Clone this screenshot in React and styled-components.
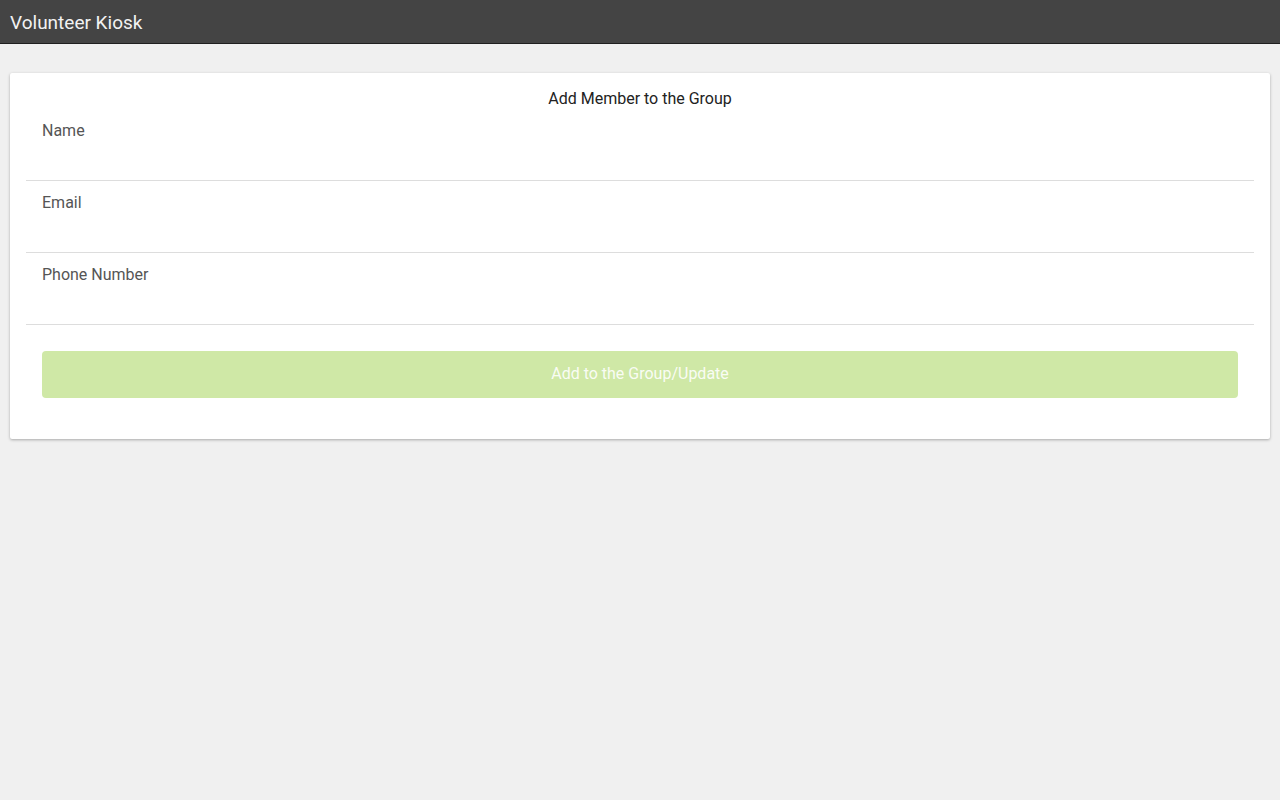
import React from 'react';
import styled, { createGlobalStyle } from 'styled-components';

const GlobalStyle = createGlobalStyle`
  html, body {
    margin: 0;
    padding: 0;
    background: #f0f0f0;
    font-family: Roboto, "Noto Sans", "Liberation Sans", sans-serif;
  }
`;

const Page = styled.div`
  min-height: 800px;
  background: #f0f0f0;
`;

const Header = styled.header`
  height: 42px;
  background: #444444;
  border-bottom: 1px solid #1f1f1f;
  display: flex;
  align-items: center;
  padding: 1px 10px 0;
  box-sizing: content-box;
`;

const HeaderTitle = styled.h1`
  margin: 0;
  font-size: 19px;
  font-weight: 400;
  color: #f2f2f2;
  line-height: 1;
`;

const Content = styled.main`
  padding: 29px 10px 10px;
`;

const Card = styled.section`
  background: #fff;
  border-radius: 2px;
  box-shadow: 0 1px 3px rgba(0, 0, 0, 0.3);
  padding: 16px 16px 41px;
`;

const CardTitle = styled.div`
  text-align: center;
  font-size: 16px;
  line-height: 20px;
  color: #222;
`;

const Field = styled.label`
  display: block;
  height: 72px;
  box-sizing: border-box;
  padding: 12px 16px 0;
  border-bottom: 1px solid #dddddd;
`;

const FieldLabel = styled.span`
  display: block;
  font-size: 16px;
  line-height: 20px;
  color: #555;
`;

const FieldInput = styled.input`
  display: block;
  width: 100%;
  border: 0;
  outline: none;
  background: transparent;
  font: inherit;
  font-size: 16px;
  height: 28px;
  padding: 0;
  margin-top: 4px;
`;

const Actions = styled.div`
  padding: 26px 16px 0;
`;

const Button = styled.button`
  width: 100%;
  height: 47px;
  border: 0;
  border-radius: 4px;
  background: #cfe8a6;
  color: rgba(255, 255, 255, 0.9);
  font-family: Roboto, "Noto Sans", "Liberation Sans", sans-serif;
  font-size: 16px;
  padding: 0 0 2px;
  cursor: default;
`;

const fields = ['Name', 'Email', 'Phone Number'];

export default function App() {
  return (
    <Page>
      <GlobalStyle />
      <Header>
        <HeaderTitle>Volunteer Kiosk</HeaderTitle>
      </Header>
      <Content>
        <Card>
          <CardTitle>Add Member to the Group</CardTitle>
          {fields.map(f => (
            <Field key={f}>
              <FieldLabel>{f}</FieldLabel>
              <FieldInput type="text" />
            </Field>
          ))}
          <Actions>
            <Button disabled>Add to the Group/Update</Button>
          </Actions>
        </Card>
      </Content>
    </Page>
  );
}
